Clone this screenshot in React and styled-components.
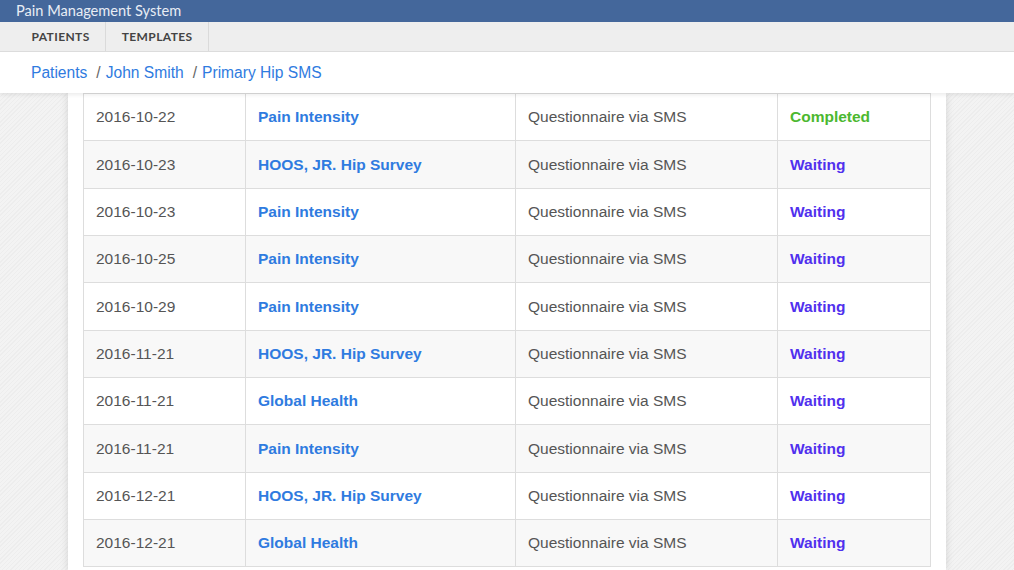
import styled, { createGlobalStyle } from 'styled-components';

const GlobalStyle = createGlobalStyle`
  html, body {
    margin: 0;
    padding: 0;
    height: 100%;
    overflow: hidden;
  }
  body {
    font-family: "Liberation Sans", Arial, sans-serif;
    background-color: #f2f2f2;
    background-image: repeating-linear-gradient(
      135deg,
      #f3f3f3 0px,
      #f3f3f3 2px,
      #ededed 2px,
      #ededed 3px
    );
  }
`;

const colors = {
  brand: '#44679b',
  link: '#2f7be0',
  done: '#4cb82f',
  waiting: '#5030ee',
  text: '#555555',
  border: '#dddddd',
};

const Page = styled.div`
  display: flex;
  flex-direction: column;
  height: 570px;
`;

const Header = styled.header`
  position: relative;
  z-index: 2;
  box-shadow: 0 2px 4px #00000014;
`;

const TitleBar = styled.div`
  height: 22px;
  background-color: ${colors.brand};
  color: #e8edf5;
  font-family: Lato, "Open Sans", sans-serif;
  font-size: 14.6px;
  line-height: 22px;
  padding-left: 16px;
`;

const Nav = styled.nav`
  display: flex;
  height: 29px;
  padding-left: 16px;
  background-color: #eeeeee;
  border-bottom: 1px solid #dcdcdc;
`;

const Tab = styled.a`
  display: flex;
  align-items: center;
  padding: 0 15.5px;
  border-right: 1px solid #dadada;
  color: #444;
  font-family: Lato, "Open Sans", sans-serif;
  font-size: 12px;
  font-weight: 700;
  letter-spacing: 0.4px;
  text-transform: uppercase;
`;

const Crumbs = styled.div`
  display: flex;
  align-items: center;
  height: 41px;
  padding: 1px 0 0 31px;
  box-sizing: border-box;
  background-color: white;
  font-size: 15.6px;

  a {
    color: ${colors.link};
  }
`;

const Sep = styled.span`
  color: #666;
  padding: 0 5px 0 9px;
`;

const Content = styled.main`
  flex: 1;
  overflow: hidden;
  display: flex;
  justify-content: center;
`;

const Card = styled.div`
  width: 848px;
  padding: 0 15px;
  background-color: white;
  box-shadow: 0 0 8px #00000022;
`;

const Table = styled.table`
  width: 100%;
  border-collapse: collapse;
  font-size: 15.5px;

  td {
    height: 47.35px;
    padding: 0 12px;
    border: 1px solid ${colors.border};
    box-sizing: border-box;
    color: ${colors.text};
    vertical-align: middle;
  }

  tr:nth-child(even) td {
    background-color: #f8f8f8;
  }
`;

const Survey = styled.a`
  color: ${colors.link};
  font-weight: 700;
`;

const Status = styled.span`
  color: ${(p) => (p.$done ? colors.done : colors.waiting)};
  font-weight: 700;
`;

const rows = [
  ['2016-10-22', 'Pain Intensity', 'Completed'],
  ['2016-10-23', 'HOOS, JR. Hip Survey', 'Waiting'],
  ['2016-10-23', 'Pain Intensity', 'Waiting'],
  ['2016-10-25', 'Pain Intensity', 'Waiting'],
  ['2016-10-29', 'Pain Intensity', 'Waiting'],
  ['2016-11-21', 'HOOS, JR. Hip Survey', 'Waiting'],
  ['2016-11-21', 'Global Health', 'Waiting'],
  ['2016-11-21', 'Pain Intensity', 'Waiting'],
  ['2016-12-21', 'HOOS, JR. Hip Survey', 'Waiting'],
  ['2016-12-21', 'Global Health', 'Waiting'],
];

export default function App() {
  return (
    <>
      <GlobalStyle />
      <Page>
        <Header>
          <TitleBar>Pain Management System</TitleBar>
          <Nav>
            <Tab>Patients</Tab>
            <Tab>Templates</Tab>
          </Nav>
          <Crumbs>
            <a>Patients</a>
            <Sep>/</Sep>
            <a>John Smith</a>
            <Sep>/</Sep>
            <a>Primary Hip SMS</a>
          </Crumbs>
        </Header>
        <Content>
          <Card>
            <Table>
              <colgroup>
                <col style={{ width: 162 }} />
                <col style={{ width: 270 }} />
                <col style={{ width: 262 }} />
                <col />
              </colgroup>
              <tbody>
                {rows.map(([date, survey, status], i) => (
                  <tr key={i}>
                    <td>{date}</td>
                    <td><Survey>{survey}</Survey></td>
                    <td>Questionnaire via SMS</td>
                    <td><Status $done={status === 'Completed'}>{status}</Status></td>
                  </tr>
                ))}
              </tbody>
            </Table>
          </Card>
        </Content>
      </Page>
    </>
  );
}
